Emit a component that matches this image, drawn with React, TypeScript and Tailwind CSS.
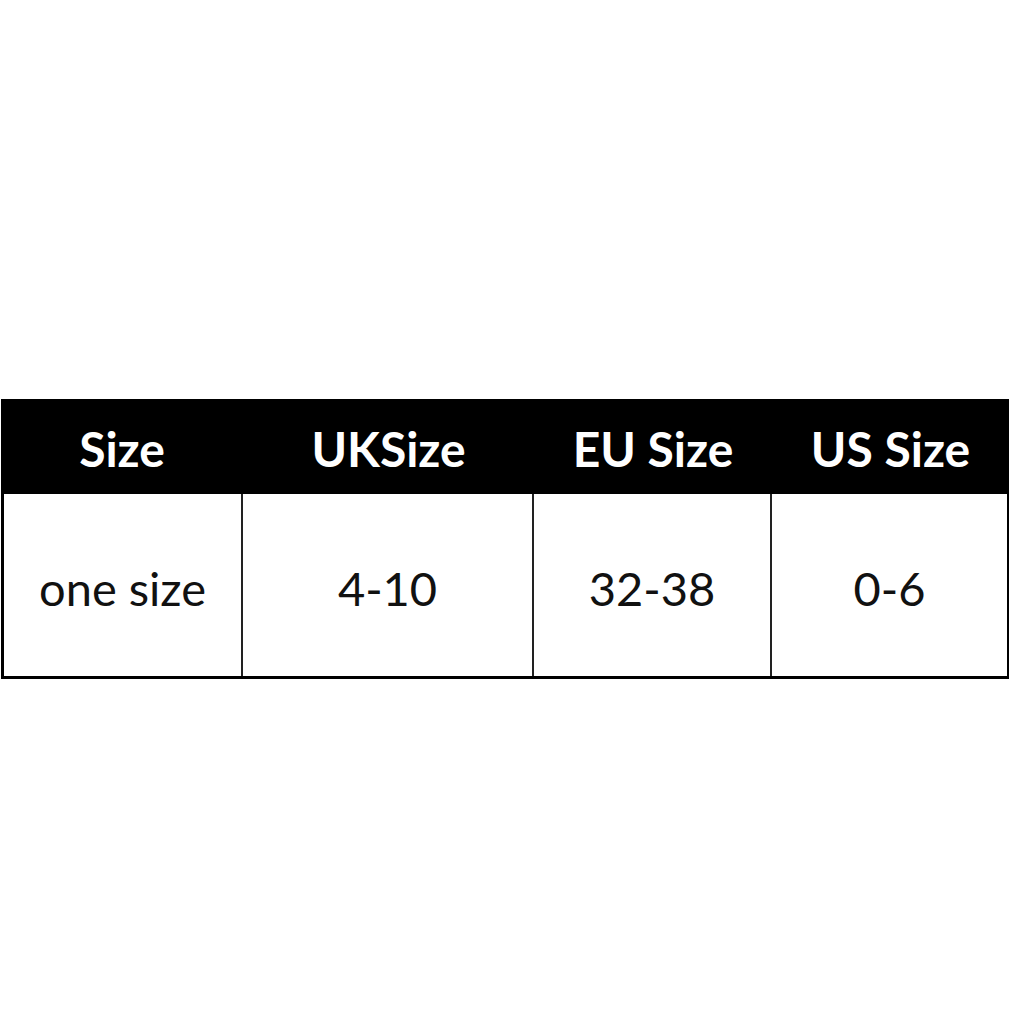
export default function App() {
  const head = ["Size", "UKSize", "EU Size", "US Size"];
  const row = ["one size", "4-10", "32-38", "0-6"];

  return (
    <div className="w-[1010px] h-[1010px] bg-white pt-[399px] font-['Lato',_'Open_Sans',_sans-serif]">
      <div className="ml-px w-[1008px]">
        {/* header band */}
        <div className="h-[95px] bg-black grid grid-cols-[242px_291px_238px_1fr] items-center text-white font-bold text-[48px] leading-none">
          {head.map((h) => (
            <div key={h} className="text-center pt-[5px]">
              {h}
            </div>
          ))}
        </div>

        {/* value row */}
        <div className="h-[185px] grid grid-cols-[239px_291px_238px_1fr] border-l-[3px] border-r-2 border-b-[3px] border-black text-[#111] text-[47px] leading-none">
          {row.map((v, i) => (
            <div
              key={v}
              className={`flex items-center justify-center pt-[6px] ${i < 3 ? "border-r-2 border-[#222]" : ""}`}
            >
              {v}
            </div>
          ))}
        </div>
      </div>
    </div>
  );
}
